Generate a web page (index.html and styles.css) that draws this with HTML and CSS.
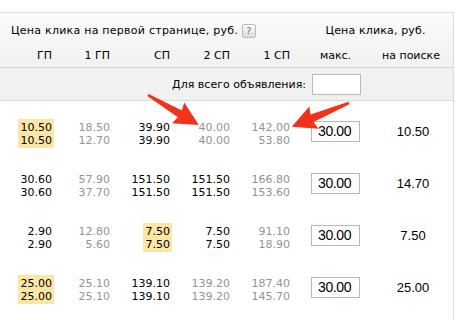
FILE: index.html
```html
<!DOCTYPE html>
<html lang="ru">
<head>
<meta charset="utf-8">
<link rel="stylesheet" href="styles.css">
</head>
<body>
<div class="page">
  <div class="table">
    <div class="head">
      <div class="head-top">
        <div class="h-first"><span class="h-first-text">Цена клика на первой странице, руб.</span> <span class="help">?</span></div>
        <div class="h-price">Цена клика, руб.</div>
      </div>
      <div class="grid head-cols">
        <div class="num">ГП</div>
        <div class="num">1 ГП</div>
        <div class="num">СП</div>
        <div class="num">2 СП</div>
        <div class="num">1 СП</div>
        <div class="ctr">макс.</div>
        <div class="ctr last">на поиске</div>
      </div>
    </div>
    <div class="all-row">
      <span class="all-label">Для всего объявления:</span>
      <span class="box"></span>
    </div>
    <div class="body">
      <div class="grid row">
        <div class="num"><span class="cell hl">10.50<br>10.50</span></div>
        <div class="num"><span class="cell gray">18.50<br>12.70</span></div>
        <div class="num"><span class="cell">39.90<br>39.90</span></div>
        <div class="num"><span class="cell gray">40.00<br>40.00</span></div>
        <div class="num"><span class="cell gray">142.00<br>53.80</span></div>
        <div class="ctr"><span class="box val">30.00</span></div>
        <div class="ctr last"><span class="search">10.50</span></div>
      </div>
      <div class="grid row">
        <div class="num"><span class="cell">30.60<br>30.60</span></div>
        <div class="num"><span class="cell gray">57.90<br>37.70</span></div>
        <div class="num"><span class="cell">151.50<br>151.50</span></div>
        <div class="num"><span class="cell">151.50<br>151.50</span></div>
        <div class="num"><span class="cell gray">166.80<br>153.60</span></div>
        <div class="ctr"><span class="box val">30.00</span></div>
        <div class="ctr last"><span class="search">14.70</span></div>
      </div>
      <div class="grid row">
        <div class="num"><span class="cell">2.90<br>2.90</span></div>
        <div class="num"><span class="cell gray">12.80<br>5.60</span></div>
        <div class="num"><span class="cell hl">7.50<br>7.50</span></div>
        <div class="num"><span class="cell">7.50<br>7.50</span></div>
        <div class="num"><span class="cell gray">91.10<br>18.90</span></div>
        <div class="ctr"><span class="box val">30.00</span></div>
        <div class="ctr last"><span class="search">7.50</span></div>
      </div>
      <div class="grid row">
        <div class="num"><span class="cell hl">25.00<br>25.00</span></div>
        <div class="num"><span class="cell gray">25.10<br>25.10</span></div>
        <div class="num"><span class="cell">139.10<br>139.10</span></div>
        <div class="num"><span class="cell gray">139.20<br>139.20</span></div>
        <div class="num"><span class="cell gray">187.40<br>145.70</span></div>
        <div class="ctr"><span class="box val">30.00</span></div>
        <div class="ctr last"><span class="search">25.00</span></div>
      </div>
    </div>
  </div>
  <svg class="arrows" width="470" height="320" viewBox="0 0 470 320">
    <g fill="#f2321b">
      <polygon transform="translate(148,95) rotate(30.6)" points="0,-1.3 37,-4 35,-12 59,0 35,12 37,4 0,1.3"/>
      <polygon transform="translate(349,103) rotate(157.5)" points="0,-1.3 40,-4 38,-12 62,0 38,12 40,4 0,1.3"/>
    </g>
  </svg>
</div>
</body>
</html>
```
FILE: styles.css
```css
html, body {
  margin: 0;
  padding: 0;
  background: #fff;
}
.page {
  position: relative;
  width: 470px;
  height: 320px;
  overflow: hidden;
  padding-top: 12px;
  box-sizing: border-box;
  font-family: "DejaVu Sans", Verdana, sans-serif;
  font-size: 11px;
  color: #000;
}
.table {
  width: 454px;
  box-sizing: border-box;
  border-top: 1px solid #dcdcdc;
  border-right: 1px solid #dcdcdc;
  height: 320px;
}
.head {
  background: linear-gradient(#fbfbfb, #f1f1f1);
  border-bottom: 1px solid #d8d8d8;
  height: 55px;
  box-sizing: border-box;
}
.head-top {
  display: flex;
  align-items: center;
  height: 32px;
  padding-top: 3px;
  box-sizing: border-box;
}
.h-first {
  width: 294px;
  padding-left: 11px;
  box-sizing: border-box;
  display: flex;
  align-items: center;
  gap: 4px;
  white-space: nowrap;
}
.h-first-text {
  letter-spacing: 0.25px;
}
.help {
  display: inline-block;
  width: 12px;
  height: 12px;
  border: 1px solid #b9b9b9;
  border-radius: 2px;
  background: linear-gradient(#fafafa, #dcdcdc);
  color: #666;
  font-size: 9px;
  line-height: 12px;
  text-align: center;
}
.h-price {
  flex: 1;
  text-align: center;
  padding-left: 4px;
  letter-spacing: 0.15px;
}
.grid {
  display: grid;
  grid-template-columns: 56px 58px 60px 60px 60px 83px 1fr;
}
.head-cols {
  height: 20px;
  align-items: center;
}
.num {
  text-align: right;
  padding-right: 2px;
}
.head-cols .num {
  padding-right: 4px;
}
.ctr {
  text-align: center;
}
.last {
  padding-right: 8px;
}
.all-row {
  display: flex;
  justify-content: flex-end;
  align-items: center;
  gap: 6px;
  padding-right: 92px;
  height: 33px;
  box-sizing: border-box;
  background: #f1f1f1;
  border-bottom: 1px solid #dadada;
}
.box {
  display: inline-block;
  width: 49px;
  height: 21px;
  box-sizing: border-box;
  border: 1px solid #b8b8b8;
  background: #fff;
}
.row {
  height: 52px;
  padding-top: 18px;
  box-sizing: border-box;
  align-items: start;
}
.cell {
  display: inline-block;
  line-height: 13px;
  padding: 2px 2px 1px 3px;
  text-align: right;
}
.gray {
  color: #939393;
}
.hl {
  background: #fbe6a5;
}
.val {
  margin-top: 2px;
  font-family: "Liberation Sans", Arial, sans-serif;
  font-size: 14px;
  letter-spacing: -0.4px;
  line-height: 19px;
  text-align: left;
  padding-left: 6px;
}
.search {
  display: inline-block;
  margin-top: 2px;
  line-height: 21px;
  font-family: "Liberation Sans", Arial, sans-serif;
  font-size: 13px;
  padding-left: 4px;
}
.arrows {
  position: absolute;
  left: 0;
  top: 0;
  pointer-events: none;
}
```
